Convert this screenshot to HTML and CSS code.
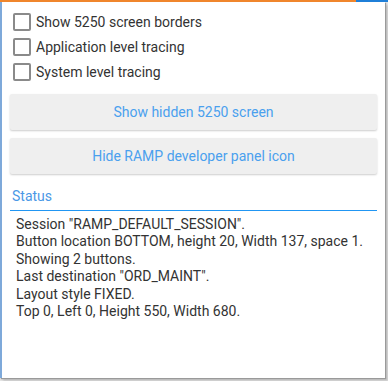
FILE: index.html
```html
<!DOCTYPE html>
<html lang="en">
  <head>
    <meta charset="UTF-8" />
    <title>RAMP developer panel</title>
    <link rel="stylesheet" href="styles.css">
  </head>
  <body>
    <div class="topbar">
      <i class="topbar-orange"></i>
      <i class="topbar-blue"></i>
    </div>
    <div class="panel">
      <label class="check"><span class="box"></span>Show 5250 screen borders</label>
      <label class="check"><span class="box"></span>Application level tracing</label>
      <label class="check"><span class="box"></span>System level tracing</label>

      <button class="btn btn-first">Show hidden 5250 screen</button>
      <button class="btn">Hide RAMP developer panel icon</button>

      <div class="status-title">Status</div>
      <div class="status-text">
        Session "RAMP_DEFAULT_SESSION".<br>
        Button location BOTTOM, height 20, Width 137, space 1.<br>
        Showing 2 buttons.<br>
        Last destination "ORD_MAINT".<br>
        Layout style FIXED.<br>
        Top 0, Left 0, Height 550, Width 680.
      </div>
    </div>
  </body>
</html>
```

FILE: styles.css
```css
* {
  box-sizing: border-box;
}
html, body {
  margin: 0;
  height: 100%;
}
body {
  background: #e4e4e4;
  font-family: Roboto, "Liberation Sans", sans-serif;
  font-size: 14px;
  color: #333;
  overflow: hidden;
}

/* coloured strip at the top */
.topbar {
  display: flex;
  height: 2px;
}
.topbar-orange {
  width: 356px;
  background: #f0862c;
}
.topbar-blue {
  flex: 1;
  background: #1f7fd8;
}

/* panel */
.panel {
  width: 385px;
  height: 376px;
  padding: 11px 8px 0 8px;
  background: #fff;
  border-left: 2px solid #7ea9da;
  box-shadow: 1px 1px 1px #9a9a9a, 3px 3px 2px #c4c4c4;
}

.check {
  display: flex;
  align-items: center;
  height: 18px;
  margin: 0 0 7px 3px;
  line-height: 18px;
}
.box {
  width: 18px;
  height: 18px;
  border: 2px solid #8a8a8a;
  border-radius: 2px;
  margin-right: 5px;
}

.btn {
  display: block;
  width: 100%;
  height: 36px;
  margin-bottom: 8px;
  border: 0;
  border-radius: 2px;
  background: #efefef;
  color: #4aa0ee;
  font: 14px Roboto, "Liberation Sans", sans-serif;
  box-shadow: 0 1px 2px rgba(0, 0, 0, 0.2);
}
.btn-first {
  margin-top: 13px;
}

.status-title {
  margin-top: 14px;
  padding: 0 0 6px 2px;
  color: #4a98e6;
  border-bottom: 1px solid #2196f3;
  line-height: 16px;
}
.status-text {
  padding: 5px 0 0 6px;
  line-height: 17.4px;
}
```
